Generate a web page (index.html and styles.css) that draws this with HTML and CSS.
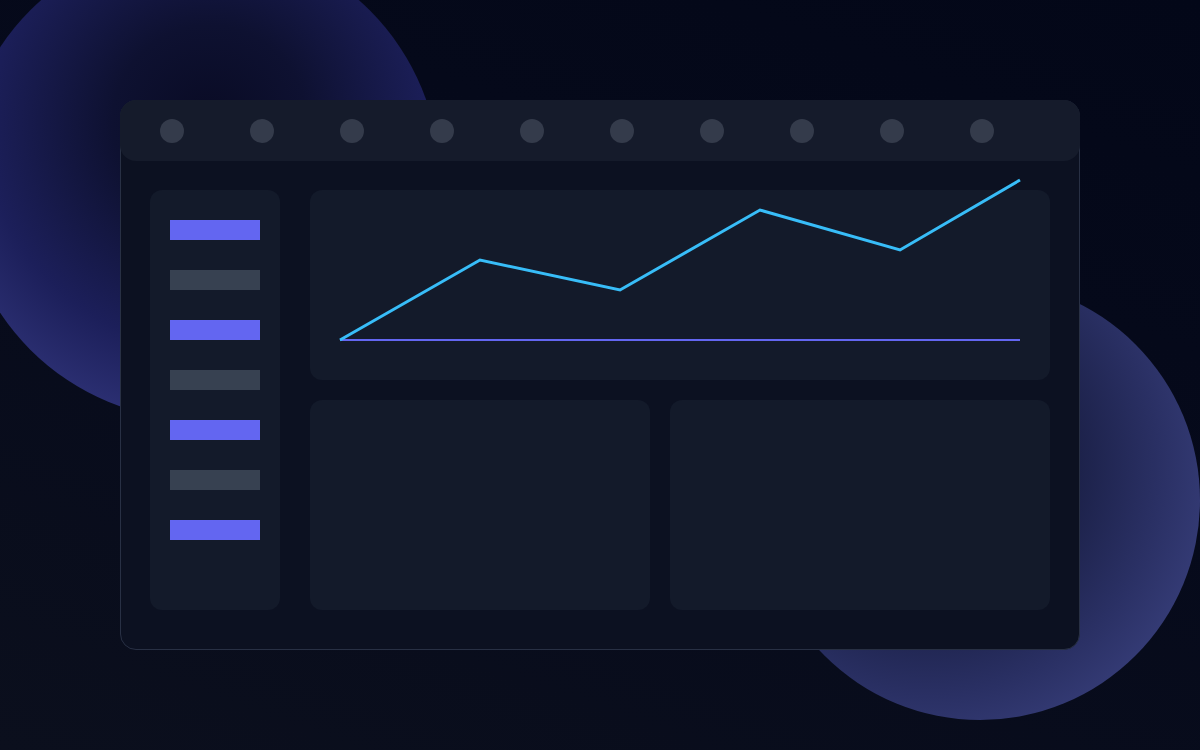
FILE: index.html
```html
<!DOCTYPE html>
<html>
<head>
<meta charset="utf-8">
<link rel="stylesheet" href="styles.css">
</head>
<body>
<div class="scene">
  <div class="orb orb-a"></div>
  <div class="orb orb-b"></div>
  <div class="window">
    <div class="titlebar">
      <span class="dot"></span><span class="dot"></span><span class="dot"></span><span class="dot"></span><span class="dot"></span>
      <span class="dot"></span><span class="dot"></span><span class="dot"></span><span class="dot"></span><span class="dot"></span>
    </div>
    <div class="content">
      <div class="sidebar">
        <span class="bar on"></span>
        <span class="bar"></span>
        <span class="bar on"></span>
        <span class="bar"></span>
        <span class="bar on"></span>
        <span class="bar"></span>
        <span class="bar on"></span>
      </div>
      <div class="main">
        <div class="panel chart">
          <svg class="chart-svg" width="740" height="190" viewBox="0 0 740 190">
            <line x1="30" y1="150" x2="710" y2="150" stroke="#6366f1" stroke-width="2"/>
            <polyline points="30,150 170,70 310,100 450,20 590,60 710,-10" fill="none" stroke="#38bdf8" stroke-width="3" stroke-linejoin="miter"/>
          </svg>
        </div>
        <div class="row">
          <div class="panel small"></div>
          <div class="panel wide"></div>
        </div>
      </div>
    </div>
  </div>
</div>
</body>
</html>
```
FILE: styles.css
```css
* { box-sizing: border-box; }
html, body {
  margin: 0;
  padding: 0;
  width: 1200px;
  height: 750px;
  overflow: hidden;
  font-family: "Inter", "Liberation Sans", sans-serif;
}
.scene {
  position: relative;
  width: 1200px;
  height: 750px;
  background: linear-gradient(200deg, #030718 0%, #060a1b 45%, #0b0f1d 100%);
  padding: 100px 120px 0 120px;
  overflow: hidden;
}
.orb {
  position: absolute;
  border-radius: 50%;
}
.orb-a {
  left: -40px;
  top: -60px;
  width: 480px;
  height: 480px;
  background: radial-gradient(circle at 52% 38%, #090b24 0%, #0e1131 25%, #1c1f5a 58%, #2f3378 82%, #3a3d88 100%);
}
.orb-b {
  left: 760px;
  top: 280px;
  width: 440px;
  height: 440px;
  background: radial-gradient(circle at 38% 42%, #0b0f24 0%, #161b3e 30%, #2a3064 62%, #3c4382 88%, #424a8c 100%);
}
.window {
  position: relative;
  width: 960px;
  height: 550px;
  border: 1px solid #283044;
  border-radius: 16px;
  background: #0c1121;
  display: flex;
  flex-direction: column;
}
.titlebar {
  margin: -1px -1px 0 -1px;
  height: 61px;
  background: #151b2b;
  border-radius: 16px;
  display: flex;
  align-items: center;
  padding-left: 40px;
  gap: 66px;
}
.dot {
  width: 24px;
  height: 24px;
  border-radius: 50%;
  background: #343b4b;
  flex: none;
}
.content {
  flex: 1;
  display: flex;
  gap: 30px;
  padding: 29px 29px 39px 29px;
}
.sidebar {
  width: 130px;
  background: #131a2a;
  border-radius: 12px;
  display: flex;
  flex-direction: column;
  gap: 30px;
  padding: 30px 20px;
}
.bar {
  display: block;
  height: 20px;
  width: 90px;
  background: #374151;
}
.bar.on { background: #6366f1; }
.main {
  flex: 1;
  display: flex;
  flex-direction: column;
  gap: 20px;
}
.panel {
  background: #131a2a;
  border-radius: 12px;
}
.chart {
  height: 190px;
  position: relative;
}
.chart-svg {
  display: block;
  overflow: visible;
}
.row {
  flex: 1;
  display: flex;
  gap: 20px;
}
.small { width: 340px; }
.wide { flex: 1; }
```
